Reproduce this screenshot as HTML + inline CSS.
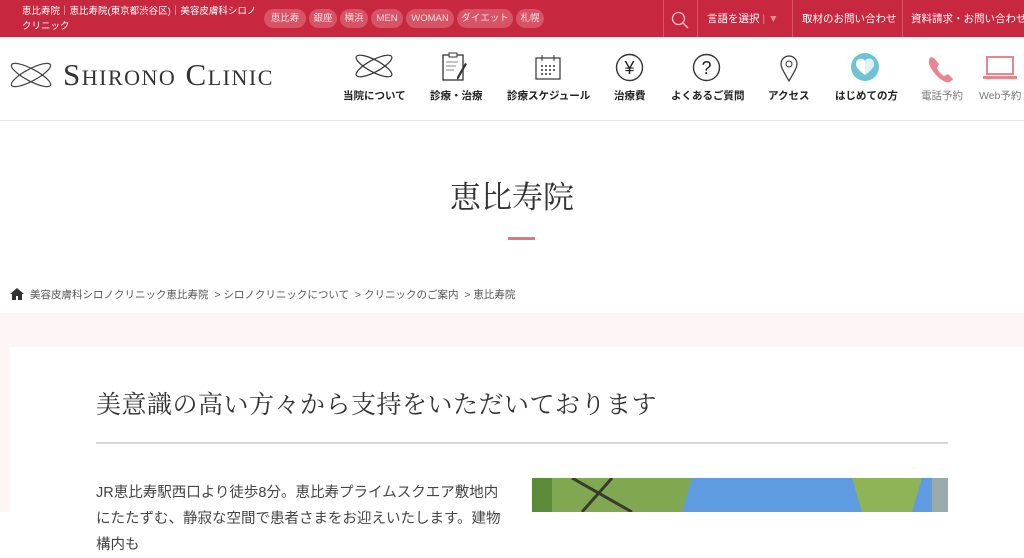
<!DOCTYPE html><html><head><meta charset="utf-8"><style>
*{margin:0;padding:0;box-sizing:border-box}
body{width:1024px;height:512px;overflow:hidden;background:#fff;font-family:"Liberation Sans","Noto Sans CJK JP",sans-serif;color:#333;position:relative}
.top{position:absolute;left:0;top:0;width:1024px;height:37px;background:#c8283f;color:#fff;overflow:hidden}
.top .t{position:absolute;left:22px;top:4px;font-size:9.5px;line-height:15px;width:240px}
.pill{position:absolute;top:9px;height:19px;border-radius:10px;background:#d65466;font-size:9.5px;line-height:19px;text-align:center;color:#f4dce0}
.sep{position:absolute;top:0;height:37px;border-left:1px solid #d9566a}
.top .r{position:absolute;top:11px;font-size:10.5px;color:#fff;white-space:nowrap}
.hdr{position:absolute;top:37px;left:0;width:1024px;height:84px;border-bottom:1px solid #e6e6e6}
.nav{position:absolute;top:88px;font-size:10.5px;font-weight:bold;color:#222;white-space:nowrap}
.ic{position:absolute}
.abs{position:absolute}
</style></head><body>
<div class="top">
<div class="t">恵比寿院｜恵比寿院(東京都渋谷区)｜美容皮膚科シロノクリニック</div>
<div class="pill" style="left:264px;width:42px">恵比寿</div>
<div class="pill" style="left:309px;width:28px">銀座</div>
<div class="pill" style="left:340px;width:28px">横浜</div>
<div class="pill" style="left:371px;width:32px">MEN</div>
<div class="pill" style="left:406px;width:48px">WOMAN</div>
<div class="pill" style="left:457px;width:56px">ダイエット</div>
<div class="pill" style="left:516px;width:28px">札幌</div>
<div class="sep" style="left:663px"></div><div class="sep" style="left:697px"></div><div class="sep" style="left:792px"></div><div class="sep" style="left:902px"></div>
<svg class="ic" style="left:671px;top:11px" width="18" height="18"><circle cx="7.5" cy="7.5" r="6" fill="none" stroke="#f3c0c8" stroke-width="1.3"/><line x1="12" y1="12" x2="17" y2="17" stroke="#f3c0c8" stroke-width="1.3"/></svg>
<div class="r" style="left:707px">言語を選択 <span style="color:#e88">| ▼</span></div>
<div class="r" style="left:802px">取材のお問い合わせ</div>
<div class="r" style="left:911px">資料請求・お問い合わせ</div>
</div>
<div class="hdr"></div>
<svg class="ic" style="left:9px;top:62px" width="44" height="26" viewBox="0 0 44 26"><g fill="none" stroke="#444" stroke-width="1.2"><ellipse cx="22" cy="13" rx="22" ry="6" transform="rotate(28 22 13)"/><ellipse cx="22" cy="13" rx="22" ry="6" transform="rotate(-28 22 13)"/></g></svg>
<div class="abs" style="left:63px;top:57px;font-family:'Liberation Serif',serif;font-size:31px;letter-spacing:1.5px;color:#333;font-variant:small-caps;white-space:nowrap">Shirono Clinic</div>
<svg class="ic" style="left:354px;top:53px" width="40" height="26" viewBox="0 0 40 26"><g fill="none" stroke="#333" stroke-width="1.2"><ellipse cx="20" cy="13" rx="20" ry="6" transform="rotate(28 20 13)"/><ellipse cx="20" cy="13" rx="20" ry="6" transform="rotate(-28 20 13)"/></g></svg>
<svg class="ic" style="left:440px;top:52px" width="30" height="30"><rect x="3" y="3" width="20" height="25" fill="none" stroke="#333" stroke-width="1.3"/><rect x="9" y="1" width="8" height="4" fill="#fff" stroke="#333"/><path d="M6 10h12M6 14h10M6 18h8" stroke="#888"/><path d="M27 12l-8 14-2 2 0-3 8-14z" fill="#333"/></svg>
<svg class="ic" style="left:534px;top:53px" width="28" height="28"><rect x="2" y="5" width="24" height="21" fill="none" stroke="#333" stroke-width="1.2"/><path d="M8 2v6M20 2v6" stroke="#333"/><g fill="#333"><circle cx="8" cy="13" r="1"/><circle cx="12" cy="13" r="1"/><circle cx="16" cy="13" r="1"/><circle cx="20" cy="13" r="1"/><circle cx="8" cy="17" r="1"/><circle cx="12" cy="17" r="1"/><circle cx="16" cy="17" r="1"/><circle cx="20" cy="17" r="1"/><circle cx="8" cy="21" r="1"/><circle cx="12" cy="21" r="1"/><circle cx="16" cy="21" r="1"/></g></svg>
<svg class="ic" style="left:615px;top:53px" width="29" height="29"><circle cx="14.5" cy="14.5" r="13" fill="none" stroke="#333" stroke-width="1.4"/><text x="14.5" y="21" text-anchor="middle" font-size="18" font-family="Liberation Sans" fill="#222">¥</text></svg>
<svg class="ic" style="left:692px;top:53px" width="29" height="29"><circle cx="14.5" cy="14.5" r="13" fill="none" stroke="#333" stroke-width="1.4"/><text x="14.5" y="21" text-anchor="middle" font-size="18" font-family="Liberation Sans" fill="#222">?</text></svg>
<svg class="ic" style="left:779px;top:54px" width="20" height="28"><path d="M10 27C5 18 2 14 2 10a8 8 0 0 1 16 0c0 4-3 8-8 17z" fill="none" stroke="#333" stroke-width="1.2"/><circle cx="10" cy="10" r="3" fill="none" stroke="#333"/></svg>
<svg class="ic" style="left:850px;top:52px" width="30" height="30"><circle cx="15" cy="15" r="14" fill="#6cc4d4"/><path d="M15 9c-2-4-9-3-9 3 0 4 5 8 9 11 4-3 9-7 9-11 0-6-7-7-9-3z" fill="#fff"/><path d="M15 10v13c4-3 9-7 9-11 0-6-7-7-9-2z" fill="#dff1f4"/></svg>
<svg class="ic" style="left:927px;top:55px" width="30" height="28"><path d="M4 2c-3 2-3 6 0 11 4 7 9 12 15 14 3 1 6-1 7-3l-5-5-4 2c-3-2-6-5-7-8l2-4-5-6z" fill="#e9858f"/></svg>
<svg class="ic" style="left:982px;top:55px" width="36" height="26"><rect x="5" y="2" width="26" height="17" fill="none" stroke="#e9858f" stroke-width="2"/><rect x="1" y="21" width="34" height="3" fill="#e9858f"/></svg>
<div class="nav" style="left:343px">当院について</div>
<div class="nav" style="left:430px">診療・治療</div>
<div class="nav" style="left:507px">診療スケジュール</div>
<div class="nav" style="left:614px">治療費</div>
<div class="nav" style="left:671px">よくあるご質問</div>
<div class="nav" style="left:768px">アクセス</div>
<div class="nav" style="left:835px">はじめての方</div>
<div class="nav" style="left:921px;font-weight:normal;color:#777">電話予約</div>
<div class="nav" style="left:979px;font-weight:normal;color:#777">Web予約</div>
<div class="abs" style="left:0;width:1024px;top:172px;text-align:center;font-family:'Liberation Serif','Noto Serif CJK SC',serif;font-size:31px;color:#333">恵比寿院</div>
<div class="abs" style="left:508px;top:237px;width:27px;height:3px;background:#e07585"></div>
<svg class="ic" style="left:10px;top:288px" width="14" height="12"><path d="M7 0L0 6h2v6h4V8h2v4h4V6h2z" fill="#333"/></svg>
<div class="abs" style="left:30px;top:287px;font-size:10.5px;color:#555;white-space:nowrap">美容皮膚科シロノクリニック恵比寿院 &nbsp;&gt; シロノクリニックについて &nbsp;&gt; クリニックのご案内 &nbsp;&gt; 恵比寿院</div>
<div class="abs" style="left:0;top:313px;width:1024px;height:199px;background:#fdf6f5"></div>
<div class="abs" style="left:10px;top:347px;width:1014px;height:165px;background:#fff"></div>
<div class="abs" style="left:96px;top:385px;font-family:'Liberation Serif','Noto Serif CJK SC',serif;font-size:25px;color:#333;letter-spacing:0.5px">美意識の高い方々から支持をいただいております</div>
<div class="abs" style="left:96px;top:442px;width:852px;height:2px;background:#d6d6d6"></div>
<div class="abs" style="left:96px;top:480px;width:412px;font-size:14.5px;line-height:26px;color:#444">JR恵比寿駅西口より徒歩8分。恵比寿プライムスクエア敷地内にたたずむ、静寂な空間で患者さまをお迎えいたします。建物構内も</div>
<svg class="ic" style="left:532px;top:478px" width="416" height="34"><rect width="416" height="34" fill="#5e9be0"/><rect width="20" height="34" fill="#5a8a3a"/><rect x="20" width="40" height="34" fill="#b5b5b0"/><path d="M20 0h140l-10 34H20z" fill="#7fa850"/><path d="M40 0l60 34M80 0l-30 34" stroke="#3a3a30" stroke-width="3"/><path d="M320 0h70l-10 34h-50z" fill="#8fb458"/><rect x="400" width="16" height="34" fill="#9aa"/></svg>
</body></html>
